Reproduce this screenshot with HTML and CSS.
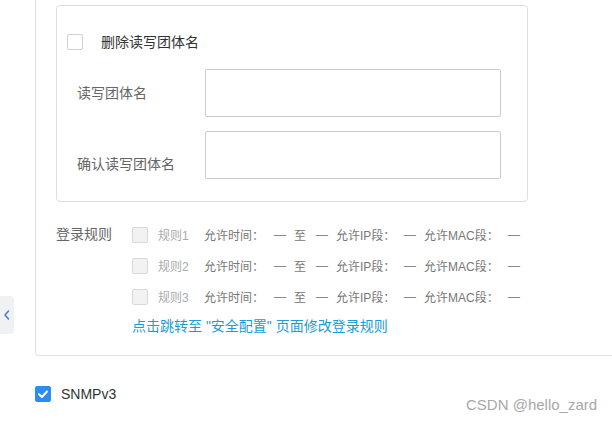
FILE: index.html
```html
<!DOCTYPE html>
<html lang="zh-CN">
<head>
<meta charset="utf-8">
<title>SNMP</title>
<link rel="stylesheet" href="styles.css">
</head>
<body>
<div class="page">
  <div class="panel">
    <div class="box">
      <div class="check-row">
        <span class="cb"></span>
        <span class="check-label">删除读写团体名</span>
      </div>
      <div class="form-row">
        <span class="form-label">读写团体名</span>
        <span class="input"></span>
      </div>
      <div class="form-row">
        <span class="form-label label-low">确认读写团体名</span>
        <span class="input"></span>
      </div>
    </div>

    <div class="rules">
      <div class="rules-label">登录规则</div>
      <div class="rules-list">
        <div class="rule">
          <span class="cb cb-disabled"></span>
          <span class="rule-name">规则1</span>
          <span class="t-time">允许时间：</span>
          <span class="dash">—</span>
          <span class="to">至</span>
          <span class="dash">—</span>
          <span class="t-ip">允许IP段：</span>
          <span class="dash">—</span>
          <span class="t-mac">允许MAC段：</span>
          <span class="dash">—</span>
        </div>
        <div class="rule">
          <span class="cb cb-disabled"></span>
          <span class="rule-name">规则2</span>
          <span class="t-time">允许时间：</span>
          <span class="dash">—</span>
          <span class="to">至</span>
          <span class="dash">—</span>
          <span class="t-ip">允许IP段：</span>
          <span class="dash">—</span>
          <span class="t-mac">允许MAC段：</span>
          <span class="dash">—</span>
        </div>
        <div class="rule">
          <span class="cb cb-disabled"></span>
          <span class="rule-name">规则3</span>
          <span class="t-time">允许时间：</span>
          <span class="dash">—</span>
          <span class="to">至</span>
          <span class="dash">—</span>
          <span class="t-ip">允许IP段：</span>
          <span class="dash">—</span>
          <span class="t-mac">允许MAC段：</span>
          <span class="dash">—</span>
        </div>
        <div class="link">点击跳转至 "安全配置" 页面修改登录规则</div>
      </div>
    </div>
  </div>

  <div class="snmp-row">
    <span class="cb cb-checked">
      <svg width="16" height="16" viewBox="0 0 16 16"><path d="M4 8.2 L7 11 L12 5.5" fill="none" stroke="#fff" stroke-width="2" stroke-linecap="round" stroke-linejoin="round"/></svg>
    </span>
    <span class="snmp-label">SNMPv3</span>
  </div>
</div>

<div class="side-tab">
  <svg width="14" height="38" viewBox="0 0 14 38"><path d="M8.5 15 L5 19 L8.5 23" fill="none" stroke="#4a7fd4" stroke-width="1.6" stroke-linecap="round" stroke-linejoin="round"/></svg>
</div>

<div class="watermark">CSDN @hello_zard</div>
</body>
</html>
```

FILE: styles.css
```css
html, body {
  margin: 0;
  padding: 0;
}
body {
  width: 612px;
  height: 422px;
  overflow: hidden;
  background: #fff;
  font-family: "Liberation Sans", "Noto Sans CJK SC", sans-serif;
  color: #333;
  position: relative;
}
.page {
  padding: 0;
}
.panel {
  margin-left: 35px;
  border-left: 1px solid #e2e2e2;
  border-bottom: 1px solid #e2e2e2;
  border-bottom-left-radius: 4px;
  padding: 5px 0 19px 20px;
}
.box {
  width: 472px;
  box-sizing: border-box;
  border: 1px solid #dedede;
  border-radius: 4px;
  padding: 28px 0 22px 10px;
}
.cb {
  display: inline-block;
  width: 16px;
  height: 16px;
  box-sizing: border-box;
  border: 1px solid #cfcfcf;
  border-radius: 2px;
  background: #fff;
  flex: none;
}
.check-row {
  display: flex;
  align-items: center;
  height: 16px;
}
.check-label {
  margin-left: 18px;
  font-size: 14px;
  line-height: 16px;
  color: #333;
}
.form-row {
  display: flex;
  align-items: flex-start;
  margin-top: 19px;
  padding-left: 10px;
}
.form-row + .form-row {
  margin-top: 14px;
}
.form-label {
  width: 128px;
  height: 48px;
  box-sizing: border-box;
  font-size: 14px;
  line-height: 48px;
  color: #666;
}
.label-low {
  padding-top: 18px;
  line-height: 30px;
}
.input {
  display: block;
  width: 296px;
  height: 48px;
  box-sizing: border-box;
  border: 1px solid #cccccc;
  border-radius: 2px;
  background: #fff;
}
.rules {
  display: flex;
  margin-top: 17px;
}
.rules-label {
  width: 76px;
  font-size: 14px;
  line-height: 31px;
  color: #666;
}
.rules-list {
  display: flex;
  flex-direction: column;
}
.rule {
  display: flex;
  align-items: center;
  height: 31px;
  font-size: 12px;
  color: #777;
  white-space: nowrap;
}
.cb-disabled {
  background: #f2f2f2;
  border-color: #d9d9d9;
}
.rule-name {
  margin-left: 10px;
  width: 46px;
  color: #aaa;
}
.t-time { width: 70px; }
.dash { width: 20px; color: #888; }
.to { width: 22px; }
.t-ip { width: 68px; }
.t-mac { width: 84px; }
.link {
  margin-top: 4px;
  font-size: 14px;
  line-height: 20px;
  color: #1b9bd8;
  white-space: nowrap;
}
.snmp-row {
  display: flex;
  align-items: center;
  margin-top: 30px;
  margin-left: 35px;
  height: 16px;
}
.cb-checked {
  background: #2d8cf0;
  border-color: #2d8cf0;
  position: relative;
}
.cb-checked svg {
  display: block;
  margin: -1px;
}
.snmp-label {
  margin-left: 10px;
  font-size: 14px;
  line-height: 16px;
  color: #333;
}
.side-tab {
  position: absolute;
  left: 0;
  top: 296px;
  width: 14px;
  height: 38px;
  background: #f0f1f3;
  border-radius: 0 4px 4px 0;
}
.side-tab svg {
  display: block;
}
.watermark {
  position: absolute;
  left: 466px;
  top: 396px;
  font-size: 15px;
  line-height: 18px;
  color: #a8a8a8;
  white-space: nowrap;
}
```
